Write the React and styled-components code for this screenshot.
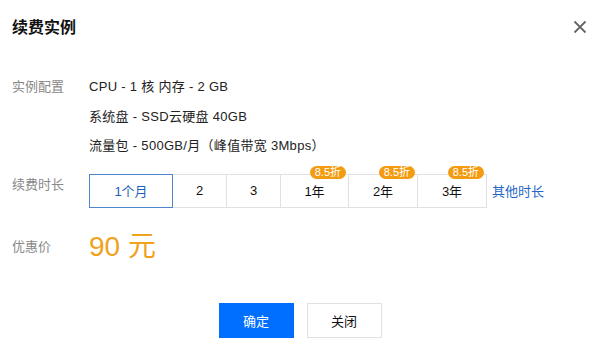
import React from "react";
import styled, { createGlobalStyle } from "styled-components";

const Global = createGlobalStyle`
  html, body { margin: 0; padding: 0; background: #fff; }
  body { font-family: "Liberation Sans", "Noto Sans CJK SC", sans-serif; color: #222; }
`;

const Dialog = styled.div`
  width: 600px;
  height: 341px;
  box-sizing: border-box;
  display: flex;
  flex-direction: column;
`;

const Header = styled.div`
  height: 52px;
  display: flex;
  align-items: center;
  justify-content: space-between;
  padding: 0 13px 0 12px;
`;

const Title = styled.h1`
  margin: 0;
  font-size: 16px;
  font-weight: bold;
  color: #111;
`;

const Close = styled.button`
  border: 0;
  background: none;
  padding: 0;
  width: 14px;
  height: 14px;
  margin-top: 2px;
  display: flex;
  cursor: pointer;
`;

const Body = styled.div`
  padding: 20px 12px 0;
  display: flex;
  flex-direction: column;
`;

const Row = styled.div`
  display: flex;
  align-items: ${(p) => p.$align || "flex-start"};
  margin-top: ${(p) => p.$mt || 0}px;
`;

const Label = styled.div`
  width: 77px;
  flex: none;
  font-size: 13px;
  color: #888;
  line-height: ${(p) => p.$lh || 29.5}px;
`;

const Lines = styled.div`
  display: flex;
  flex-direction: column;
  font-size: 13px;
  line-height: 29.5px;
  letter-spacing: 0.3px;
  color: #222;
`;

const Tabs = styled.div`
  display: flex;
  align-items: center;
`;

const Tab = styled.div`
  position: relative;
  width: ${(p) => p.$w}px;
  height: 34px;
  box-sizing: border-box;
  margin-left: -1px;
  border: 1px solid ${(p) => (p.$active ? "#4f86cc" : "#e1e1e1")};
  z-index: ${(p) => (p.$active ? 1 : 0)};
  display: flex;
  align-items: center;
  justify-content: center;
  font-size: 13px;
  color: ${(p) => (p.$active ? "#1d5fba" : "#111")};
  &:first-child { margin-left: 0; }
`;

const Badge = styled.span`
  position: absolute;
  top: -9px;
  right: 2px;
  height: 13px;
  padding: 0 5px;
  border-radius: 7px;
  background: #f39c12;
  color: #fff;
  font-size: 11px;
  line-height: 13px;
  white-space: nowrap;
`;

const More = styled.a`
  margin-left: 5px;
  font-size: 13px;
  color: #2466c9;
  text-decoration: none;
  cursor: pointer;
`;

const Price = styled.div`
  font-size: 28px;
  line-height: 36px;
  color: #f0a21c;
`;

const Footer = styled.div`
  margin-top: 38px;
  display: flex;
  justify-content: center;
  gap: 13px;
`;

const Button = styled.button`
  width: 75px;
  height: 35px;
  box-sizing: border-box;
  font-family: inherit;
  font-size: 13px;
  border: 1px solid ${(p) => (p.$primary ? "#006eff" : "#e1e1e1")};
  background: ${(p) => (p.$primary ? "#006eff" : "#fff")};
  color: ${(p) => (p.$primary ? "#fff" : "#111")};
  cursor: pointer;
`;

const tabs = [
  { t: "1个月", w: 84, active: true },
  { t: "2", w: 55 },
  { t: "3", w: 55 },
  { t: "1年", w: 69, badge: "8.5折" },
  { t: "2年", w: 70, badge: "8.5折" },
  { t: "3年", w: 70, badge: "8.5折" },
];

export default function App() {
  return (
    <>
      <Global />
      <Dialog>
        <Header>
          <Title>续费实例</Title>
          <Close aria-label="关闭">
            <svg width="14" height="14" viewBox="0 0 14 14">
              <path d="M1.5 1.5 L12.5 12.5 M12.5 1.5 L1.5 12.5" stroke="#666" strokeWidth="1.8" />
            </svg>
          </Close>
        </Header>
        <Body>
          <Row>
            <Label>实例配置</Label>
            <Lines>
              <span>CPU - 1 核 内存 - 2 GB</span>
              <span>系统盘 - SSD云硬盘 40GB</span>
              <span>流量包 - 500GB/月（峰值带宽 3Mbps）</span>
            </Lines>
          </Row>
          <Row $mt={13}>
            <Label $lh={22}>续费时长</Label>
            <Tabs>
              {tabs.map((x) => (
                <Tab key={x.t} $w={x.w} $active={x.active}>
                  {x.t}
                  {x.badge && <Badge>{x.badge}</Badge>}
                </Tab>
              ))}
              <More>其他时长</More>
            </Tabs>
          </Row>
          <Row $mt={21} $align="center">
            <Label $lh={22}>优惠价</Label>
            <Price>90 元</Price>
          </Row>
        </Body>
        <Footer>
          <Button $primary>确定</Button>
          <Button>关闭</Button>
        </Footer>
      </Dialog>
    </>
  );
}
